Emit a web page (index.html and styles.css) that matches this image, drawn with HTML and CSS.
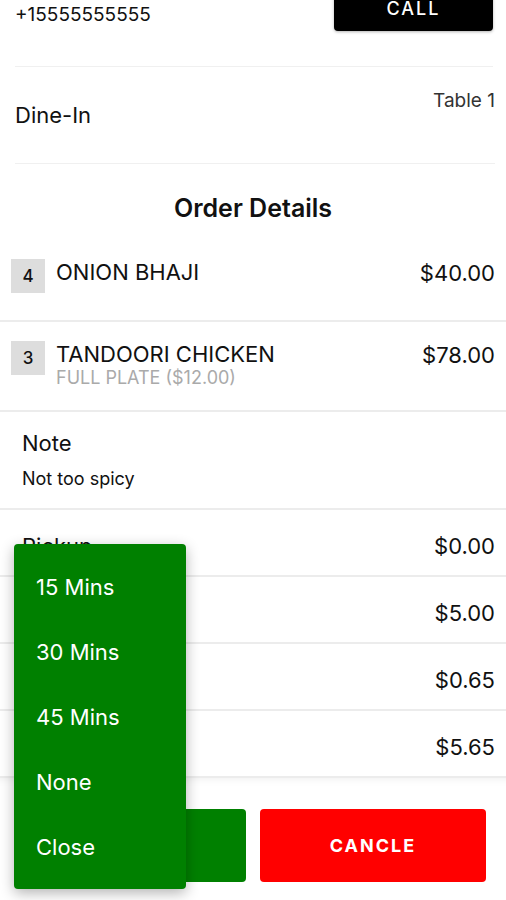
FILE: index.html
```html
<!DOCTYPE html>
<html lang="en">
<head>
    <meta charset="UTF-8">
    <meta name="viewport" content="width=device-width, initial-scale=1.0">
    <title>Order</title>
    <link rel="stylesheet" href="styles.css">
</head>
<body>
    <div class="contact">
        <span class="phone">+15555555555</span>
        <button class="call-btn">CALL</button>
    </div>

    <div class="service">
        <span class="service-type">Dine-In</span>
        <span class="table-no">Table 1</span>
    </div>

    <h2 class="section-title">Order Details</h2>

    <div class="item">
        <span class="qty">4</span>
        <div class="item-info">
            <div class="item-name">ONION BHAJI</div>
        </div>
        <span class="price">$40.00</span>
    </div>

    <div class="item">
        <span class="qty">3</span>
        <div class="item-info">
            <div class="item-name">TANDOORI CHICKEN</div>
            <div class="item-option">FULL PLATE ($12.00)</div>
        </div>
        <span class="price">$78.00</span>
    </div>

    <div class="note">
        <div class="note-label">Note</div>
        <div class="note-text">Not too spicy</div>
    </div>

    <div class="summary-row"><span class="summary-label">Pickup</span><span>$0.00</span></div>
    <div class="summary-row"><span class="summary-label"></span><span>$5.00</span></div>
    <div class="summary-row"><span class="summary-label"></span><span>$0.65</span></div>
    <div class="summary-row"><span class="summary-label"></span><span>$5.65</span></div>

    <div class="actions">
        <button class="action-btn accept"></button>
        <button class="action-btn cancel">CANCLE</button>
    </div>

    <div class="time-menu">
        <div class="menu-item">15 Mins</div>
        <div class="menu-item">30 Mins</div>
        <div class="menu-item">45 Mins</div>
        <div class="menu-item">None</div>
        <div class="menu-item">Close</div>
    </div>
</body>
</html>
```

FILE: styles.css
```css
body {
    font-family: Inter, "Noto Sans", sans-serif;
    background-color: #fff;
    color: #111;
    margin: 0;
    overflow: hidden;
}
button {
    font-family: inherit;
    border: none;
    cursor: pointer;
}
.contact {
    display: flex;
    justify-content: space-between;
    align-items: flex-end;
    margin: -15px 13px 0 15px;
    padding-bottom: 35px;
    border-bottom: 1px solid #f0f0f0;
}
.phone {
    font-size: 19px;
    line-height: 23px;
    margin-bottom: 5px;
}
.call-btn {
    width: 159px;
    height: 46px;
    background-color: #000;
    color: #fff;
    font-size: 18px;
    font-weight: 500;
    letter-spacing: 2px;
    border-radius: 4px;
    box-shadow: 0 1px 3px rgba(0, 0, 0, 0.3);
}
.service {
    display: flex;
    justify-content: space-between;
    align-items: center;
    height: 96px;
    margin: 0 11px 0 15px;
    border-bottom: 1px solid #f0f0f0;
}
.service-type {
    font-size: 22px;
}
.table-no {
    align-self: flex-start;
    margin-top: 22px;
    font-size: 19px;
    color: #333;
}
.section-title {
    margin: 0;
    padding: 30px 0 18px;
    font-size: 25px;
    font-weight: 600;
    line-height: 28px;
    text-align: center;
}
.item {
    display: flex;
    align-items: flex-start;
    padding: 19px 11px 21px;
    border-bottom: 2px solid #ececec;
}
.qty {
    width: 34px;
    height: 34px;
    margin-right: 11px;
    background-color: #ddd;
    font-size: 17px;
    font-weight: 500;
    line-height: 34px;
    text-align: center;
}
.item-info {
    flex: 1;
    min-height: 40px;
}
.item-name {
    font-size: 22px;
    line-height: 24px;
    padding-top: 1px;
}
.item-option {
    font-size: 18px;
    line-height: 23px;
    color: #aaa;
}
.price {
    font-size: 22px;
    line-height: 28px;
}
.note {
    padding: 18px 22px 17px;
    border-bottom: 2px solid #ececec;
}
.note-label {
    font-size: 22px;
    line-height: 26px;
    margin-bottom: 11px;
}
.note-text {
    font-size: 18px;
    line-height: 24px;
}
.summary-row {
    box-sizing: border-box;
    display: flex;
    justify-content: space-between;
    align-items: center;
    height: 67px;
    padding: 6px 11px 0 22px;
    border-bottom: 2px solid #ececec;
    font-size: 22px;
}
.actions {
    display: flex;
    gap: 14px;
    padding: 31px 20px 18px;
    box-shadow: inset 0 10px 10px -10px rgba(0, 0, 0, 0.08);
}
.action-btn {
    flex: 1;
    height: 73px;
    border-radius: 4px;
    color: #fff;
    font-size: 18px;
    font-weight: 700;
    letter-spacing: 2px;
}
.accept {
    background-color: #008000;
}
.cancel {
    background-color: #ff0000;
}
.time-menu {
    position: absolute;
    top: 544px;
    left: 14px;
    width: 172px;
    padding: 10px 0;
    background-color: #008000;
    border-radius: 4px;
    box-shadow: 0 4px 14px rgba(0, 0, 0, 0.3);
}
.menu-item {
    display: flex;
    align-items: center;
    height: 65px;
    padding-left: 22px;
    font-size: 22px;
    color: #fff;
}
```
